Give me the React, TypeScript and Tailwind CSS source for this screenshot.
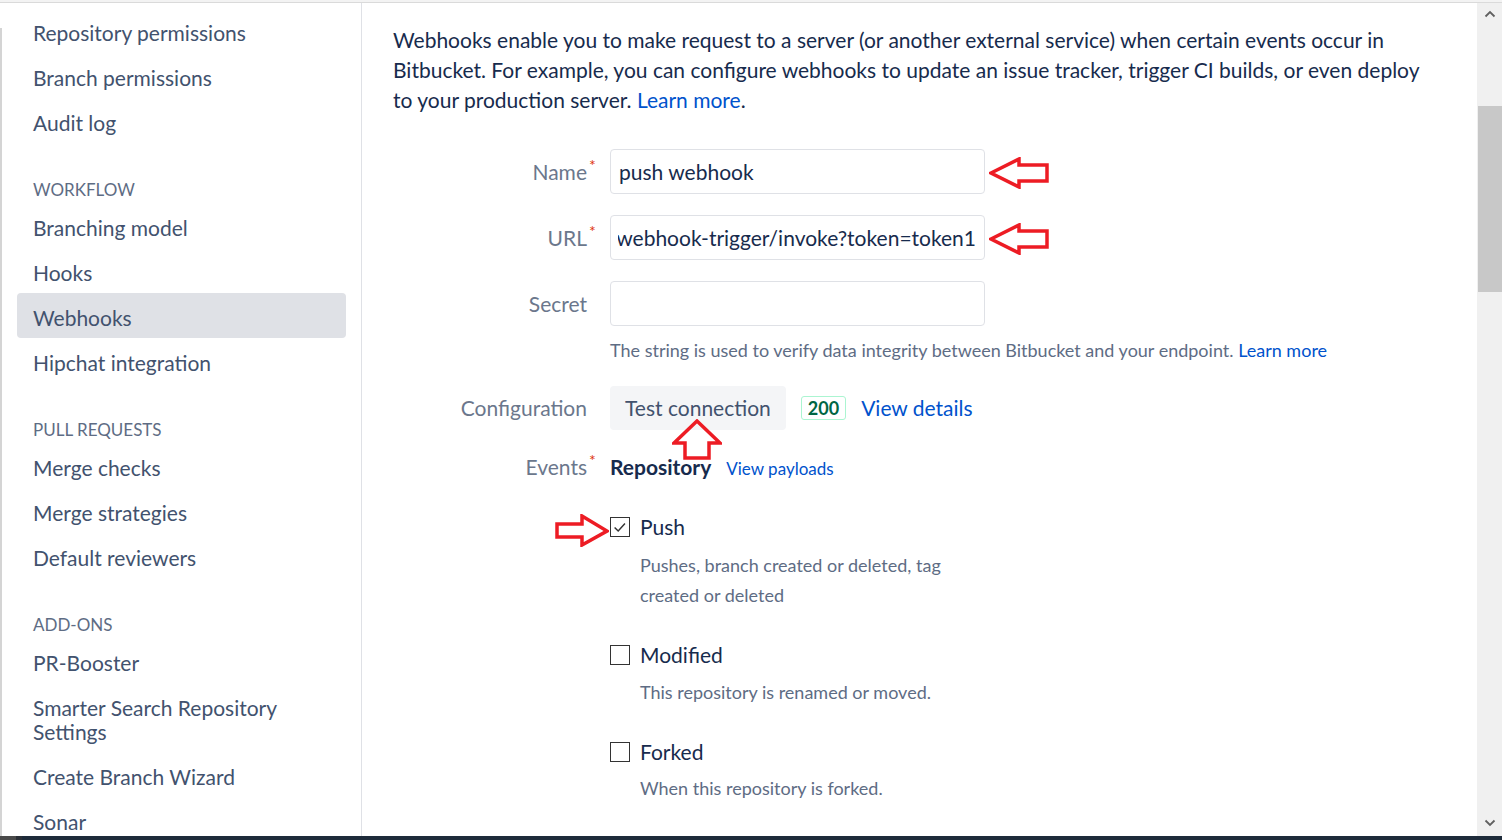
import React from "react";

type Section = { title?: string; items: string[] };

const sections: Section[] = [
  { items: ["Repository permissions", "Branch permissions", "Audit log"] },
  {
    title: "WORKFLOW",
    items: ["Branching model", "Hooks", "Webhooks", "Hipchat integration"],
  },
  {
    title: "PULL REQUESTS",
    items: ["Merge checks", "Merge strategies", "Default reviewers"],
  },
  {
    title: "ADD-ONS",
    items: [
      "PR-Booster",
      "Smarter Search Repository Settings",
      "Create Branch Wizard",
      "Sonar",
    ],
  },
];

const ACTIVE = "Webhooks";

function LeftArrow() {
  return (
    <svg width="60" height="32" viewBox="0 0 60 32" className="block">
      <polygon
        points="2,16 30,2 30,8 58,8 58,24 30,24 30,30"
        fill="none"
        stroke="#ed1c24"
        strokeWidth="3.5"
        strokeLinejoin="miter"
      />
    </svg>
  );
}

function RightArrow() {
  return (
    <svg width="54" height="33" viewBox="0 0 54 33" className="block">
      <polygon
        points="2,10 27,10 27,2 52,17 27,31 27,23 2,23"
        fill="none"
        stroke="#ed1c24"
        strokeWidth="3.5"
      />
    </svg>
  );
}

function UpArrow() {
  return (
    <svg width="50" height="42" viewBox="0 0 50 42" className="block">
      <polygon
        points="25,2 48,24 37,24 37,39 13,39 13,24 2,24"
        fill="none"
        stroke="#ed1c24"
        strokeWidth="3.5"
      />
    </svg>
  );
}

function Sidebar() {
  return (
    <div className="flex shrink-0">
      {/* window edge */}
      <div className="w-[2px] pt-[25px]">
        <div className="h-full bg-[#d4d4d4]" />
      </div>
      <nav className="w-[360px] border-r border-[#dfe1e6] pl-[15px] pr-[15px] pt-[5px]">
        {sections.map((section, i) => (
          <div key={i}>
            {section.title && (
              <div className="h-[60px] pt-[35px] pl-[16px] text-[17px] leading-[24px] text-[#5e6c84]">
                {section.title}
              </div>
            )}
            {section.items.map((item) => (
              <div
                key={item}
                className={
                  item === ACTIVE
                    ? "rounded-[4px] bg-[#dfe1e6] px-[16px] pt-[12.5px] pb-[8.5px] text-[21px] leading-[24px] text-[#42526e]"
                    : "rounded-[4px] px-[16px] pt-[12.5px] pb-[8.5px] text-[21px] leading-[24px] text-[#42526e]"
                }
              >
                {item}
              </div>
            ))}
          </div>
        ))}
      </nav>
    </div>
  );
}

function Label({ text, required }: { text: string; required?: boolean }) {
  return (
    <div className="w-[194px] shrink-0 text-right text-[21px] leading-[30px] text-[#6b778c]">
      <span className="relative">
        {text}
        {required && (
          <span className="absolute left-full top-[-9px] ml-[2px] text-[16px] text-[#de350b]">
            *
          </span>
        )}
      </span>
    </div>
  );
}

function EventOption({
  title,
  description,
  checked,
  withArrow,
  className,
  descClassName,
}: {
  title: string;
  description: string;
  checked?: boolean;
  withArrow?: boolean;
  className: string;
  descClassName: string;
}) {
  return (
    <div className={className}>
      <div className="flex items-center leading-[30px]">
        <div className="relative h-[20px] w-[20px] shrink-0 border-[1.5px] border-[#333333] bg-white">
          {checked && (
            <svg viewBox="0 0 20 20" className="absolute inset-0 h-full w-full">
              <path d="M4 10.5 L8 14.5 L15.5 6" fill="none" stroke="#333333" strokeWidth="1.6" />
            </svg>
          )}
          {withArrow && (
            <div className="absolute right-full top-[-4px] mr-[2px]">
              <RightArrow />
            </div>
          )}
        </div>
        <span className="ml-[10px] text-[21px] text-[#172b4d]">{title}</span>
      </div>
      <p className={descClassName}>{description}</p>
    </div>
  );
}

function WebhookForm() {
  return (
    <div className="mt-[34px]">
      {/* Name */}
      <div className="flex items-center">
        <Label text="Name" required />
        <div className="relative ml-[23px]">
          <div className="flex h-[45px] w-[375px] items-center rounded-[4px] border border-[#dfe1e6] px-[8px] text-[21px] text-[#172b4d]">
            push webhook
          </div>
          <div className="absolute left-full top-[8px] ml-[4px]">
            <LeftArrow />
          </div>
        </div>
      </div>

      {/* URL */}
      <div className="mt-[21px] flex items-center">
        <Label text="URL" required />
        <div className="relative ml-[23px]">
          <div className="flex h-[45px] w-[375px] items-center rounded-[4px] border border-[#dfe1e6] pl-[7px] pr-[8px] text-[21px] text-[#172b4d]">
            <div className="flex min-w-0 flex-1 justify-end overflow-hidden whitespace-nowrap">
              http://jenkins.local:8080/generic-webhook-trigger/invoke?token=token1
            </div>
          </div>
          <div className="absolute left-full top-[8px] ml-[4px]">
            <LeftArrow />
          </div>
        </div>
      </div>

      {/* Secret */}
      <div className="mt-[21px] flex items-center">
        <Label text="Secret" />
        <div className="ml-[23px] h-[45px] w-[375px] rounded-[4px] border border-[#dfe1e6]" />
      </div>
      <p className="ml-[217px] mt-[12px] text-[18px] leading-[24px] text-[#5e6c84]">
        The string is used to verify data integrity between Bitbucket and your endpoint.{" "}
        <a className="text-[#0052cc]">Learn more</a>
      </p>

      {/* Configuration */}
      <div className="mt-[24px] flex items-center">
        <Label text="Configuration" />
        <div className="ml-[23px] flex items-center">
          <div className="relative">
            <button className="h-[44px] rounded-[4px] bg-[#f4f5f7] px-[15px] text-[21px] text-[#42526e]">
              Test connection
            </button>
            <div className="absolute left-[62px] top-[33px]">
              <UpArrow />
            </div>
          </div>
          <span className="ml-[15px] flex h-[24px] items-center rounded-[3px] border border-[#abf5d1] px-[6px] text-[18px] font-bold text-[#006644]">
            200
          </span>
          <a className="ml-[15px] text-[21px] text-[#0052cc]">View details</a>
        </div>
      </div>

      {/* Events */}
      <div className="mt-[22px] flex items-baseline">
        <Label text="Events" required />
        <div className="ml-[23px] flex items-baseline">
          <span className="text-[21px] font-bold leading-[30px] text-[#172b4d]">Repository</span>
          <a className="ml-[15px] text-[17px] text-[#0052cc]">View payloads</a>
        </div>
      </div>

      <div className="ml-[217px]">
        <EventOption
          className="mt-[30px]"
          descClassName="mt-[8px] w-[345px] pl-[30px] text-[18px] leading-[30px] text-[#5e6c84]"
          title="Push"
          description="Pushes, branch created or deleted, tag created or deleted"
          checked
          withArrow
        />
        <EventOption
          className="mt-[30px]"
          descClassName="mt-[7px] w-[345px] pl-[30px] text-[18px] leading-[30px] text-[#5e6c84]"
          title="Modified"
          description="This repository is renamed or moved."
        />
        <EventOption
          className="mt-[30px]"
          descClassName="mt-[6px] w-[345px] pl-[30px] text-[18px] leading-[30px] text-[#5e6c84]"
          title="Forked"
          description="When this repository is forked."
        />
      </div>
    </div>
  );
}

function Scrollbar() {
  return (
    <div className="flex w-[25px] shrink-0 flex-col bg-[#f0f0f0]">
      <div className="flex h-[22px] items-center justify-center">
        <svg width="12" height="8" viewBox="0 0 12 8">
          <path d="M1.5 6.5 L6 2 L10.5 6.5" fill="none" stroke="#606060" strokeWidth="1.8" />
        </svg>
      </div>
      <div className="ml-[1px] mt-[81px] h-[186px] bg-[#c8c8c8]" />
      <div className="flex-1" />
      <div className="flex h-[22px] items-center justify-center pb-[4px]">
        <svg width="12" height="8" viewBox="0 0 12 8">
          <path d="M1.5 1.5 L6 6 L10.5 1.5" fill="none" stroke="#606060" strokeWidth="1.8" />
        </svg>
      </div>
    </div>
  );
}

export default function App() {
  return (
    <div className="flex h-[840px] w-[1502px] flex-col overflow-hidden bg-white font-[Lato,sans-serif]">
      <div className="h-[3px] shrink-0 border-b border-[#dadada] bg-[#f3f3f3]" />
      <div className="flex min-h-0 flex-1">
        <Sidebar />
        <main className="min-w-0 flex-1 overflow-hidden pl-[31px] pt-[22px]">
          <p className="w-[1050px] text-[21px] leading-[30px] text-[#172b4d]">
            Webhooks enable you to make request to a server (or another external service) when
            certain events occur in Bitbucket. For example, you can configure webhooks to update an
            issue tracker, trigger CI builds, or even deploy to your production server.{" "}
            <a className="text-[#0052cc]">Learn more</a>.
          </p>
          <WebhookForm />
        </main>
        <Scrollbar />
      </div>
      <div className="flex h-[4px] shrink-0 bg-[#1e2b3a]">
        <div className="w-[16px] bg-[#4a4a4a]" />
        <div className="w-[6px] bg-[#2a2f36]" />
      </div>
    </div>
  );
}
